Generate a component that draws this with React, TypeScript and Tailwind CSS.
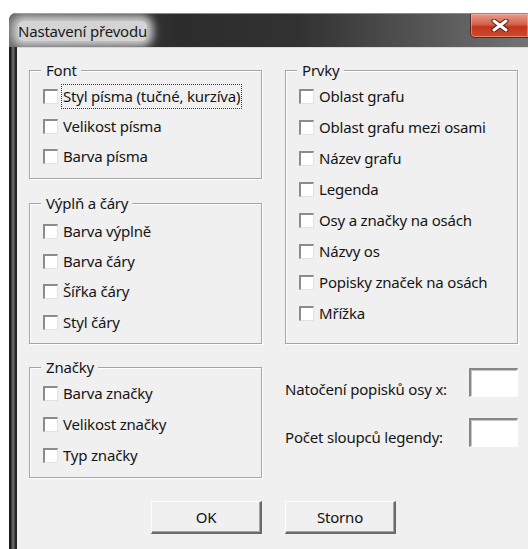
import React from 'react';

type CheckProps = { label: string; focused?: boolean; rowClass: string };

// Classic sunken checkbox with a label, one per row
const CheckRow = ({ label, focused, rowClass }: CheckProps) => (
  <div className={`flex items-center pl-[13px] ${rowClass}`}>
    <span className="w-[15px] h-[15px] shrink-0 bg-white border-t-2 border-l-2 border-r border-b border-t-[#8c8c8c] border-l-[#8c8c8c] border-r-[#e2e2e2] border-b-[#e2e2e2]" />
    <span
      className={
        focused
          ? 'ml-[3px] px-[1px] py-[1px] border border-dotted border-[#3a3a3a] leading-[21px] whitespace-nowrap'
          : 'ml-[5px] leading-[21px] whitespace-nowrap'
      }
    >
      {label}
    </span>
  </div>
);

type GroupProps = { title: string; className: string; children: React.ReactNode };

// Etched group box; the caption sits on the top border line
const GroupBox = ({ title, className, children }: GroupProps) => (
  <div
    className={`relative border border-[#a6a6a6] shadow-[inset_1px_1px_0_#ffffff,1px_1px_0_#ffffff] ${className}`}
  >
    <span className="absolute -top-[11px] left-[11px] bg-[#f0f0f0] pl-[5px] pr-[4px] leading-[20px]">
      {title}
    </span>
    {children}
  </div>
);

const TextBox = () => (
  <div className="w-[49px] h-[29px] bg-white border-t-2 border-l-2 border-r border-b border-t-[#878787] border-l-[#878787] border-r-[#ffffff] border-b-[#ffffff] shadow-[inset_1px_1px_0_#c8c8c8]" />
);

const PushButton = ({ label }: { label: string }) => (
  <button className="w-[111px] h-[33px] bg-[#f0f0f0] border-t border-l border-r-2 border-b-2 border-t-[#fdfdfd] border-l-[#fdfdfd] border-r-[#6a6a6a] border-b-[#6a6a6a] shadow-[inset_-1px_-1px_0_#a8a8a8] text-[#111]">
    {label}
  </button>
);

export default function App() {
  const fontItems = ['Styl písma (tučné, kurzíva)', 'Velikost písma', 'Barva písma'];
  const fillItems = ['Barva výplně', 'Barva čáry', 'Šířka čáry', 'Styl čáry'];
  const markItems = ['Barva značky', 'Velikost značky', 'Typ značky'];
  const partItems = [
    'Oblast grafu',
    'Oblast grafu mezi osami',
    'Název grafu',
    'Legenda',
    'Osy a značky na osách',
    'Názvy os',
    'Popisky značek na osách',
    'Mřížka',
  ];

  return (
    <div className="w-[528px] h-[549px] overflow-hidden bg-white pl-[9px] pt-[13px] font-['Noto_Sans','Open_Sans',sans-serif] text-[15px] tracking-[-0.2px] text-[#151515]">
      <div className="w-[530px] h-[560px] flex flex-col rounded-tl-[7px] overflow-hidden bg-[#2a2a2a]">
        {/* title bar */}
        <div className="h-[34px] shrink-0 flex items-start border-t border-[#8a8a8a] bg-[linear-gradient(to_right,#6a6a6a_0%,#474747_5%,#2c2c2c_32%,#323232_55%,#585858_80%,#767676_100%)]">
          <div className="flex-1 h-full flex items-center pl-[9px]">
            <span className="leading-[20px] text-[#1a1a1a] bg-[#d4d4d4] rounded-[6px] shadow-[0_0_9px_6px_#cdcdcd]">
              Nastavení převodu
            </span>
          </div>
          <div className="w-[59px] h-[24px] mr-[10px] flex items-center justify-center rounded-bl-[5px] border border-t-0 border-[#5a2a20] bg-[linear-gradient(to_bottom,#e79a8a_0%,#d5624c_45%,#c2361c_55%,#cf4a2c_100%)] shadow-[inset_0_0_0_1px_rgba(255,200,190,0.45)]">
            <svg width="22" height="13" viewBox="0 0 22 13">
              <path d="M5 2 L17 11 M17 2 L5 11" stroke="#5b1e12" strokeWidth="5" strokeLinecap="round" />
              <path d="M5 2 L17 11 M17 2 L5 11" stroke="#ffffff" strokeWidth="3" strokeLinecap="round" />
            </svg>
          </div>
        </div>

        {/* frame strip + client area */}
        <div className="flex-1 flex">
          <div className="w-[8px] shrink-0 bg-[linear-gradient(to_right,#1a1a1a_0px,#1a1a1a_2px,#5c5c5c_3px,#6a6a6a_5px,#262626_6px,#262626_8px)]" />
          <div className="flex-1 bg-[#f0f0f0] border-t border-[#d9d9d9] pl-[12px] pt-[22px]">
            <div className="grid grid-cols-[233px_233px] gap-x-[23px]">
              <div className="flex flex-col">
                <GroupBox title="Font" className="h-[109px] pt-[10px]">
                  {fontItems.map((t, i) => (
                    <CheckRow key={t} label={t} focused={i === 0} rowClass="h-[30px]" />
                  ))}
                </GroupBox>
                <GroupBox title="Výplň a čáry" className="h-[141px] mt-[24px] pt-[12px]">
                  {fillItems.map((t) => (
                    <CheckRow key={t} label={t} rowClass="h-[30.4px]" />
                  ))}
                </GroupBox>
                <GroupBox title="Značky" className="h-[111px] mt-[23px] pt-[10px]">
                  {markItems.map((t) => (
                    <CheckRow key={t} label={t} rowClass="h-[31px]" />
                  ))}
                </GroupBox>
              </div>

              <div className="flex flex-col">
                <GroupBox title="Prvky" className="h-[274px] pt-[10px]">
                  {partItems.map((t) => (
                    <CheckRow key={t} label={t} rowClass="h-[31px]" />
                  ))}
                </GroupBox>
                <div className="mt-[24px] h-[29px] flex items-center justify-between">
                  <span className="mt-[14px] whitespace-nowrap">Natočení popisků osy x:</span>
                  <TextBox />
                </div>
                <div className="mt-[21px] h-[29px] flex items-center justify-between">
                  <span className="mt-[10px] whitespace-nowrap">Počet sloupců legendy:</span>
                  <TextBox />
                </div>
              </div>
            </div>

            <div className="grid grid-cols-[233px_233px] gap-x-[23px] mt-[23px]">
              <div className="flex justify-end">
                <PushButton label="OK" />
              </div>
              <div className="flex">
                <PushButton label="Storno" />
              </div>
            </div>
          </div>
        </div>
      </div>
    </div>
  );
}
